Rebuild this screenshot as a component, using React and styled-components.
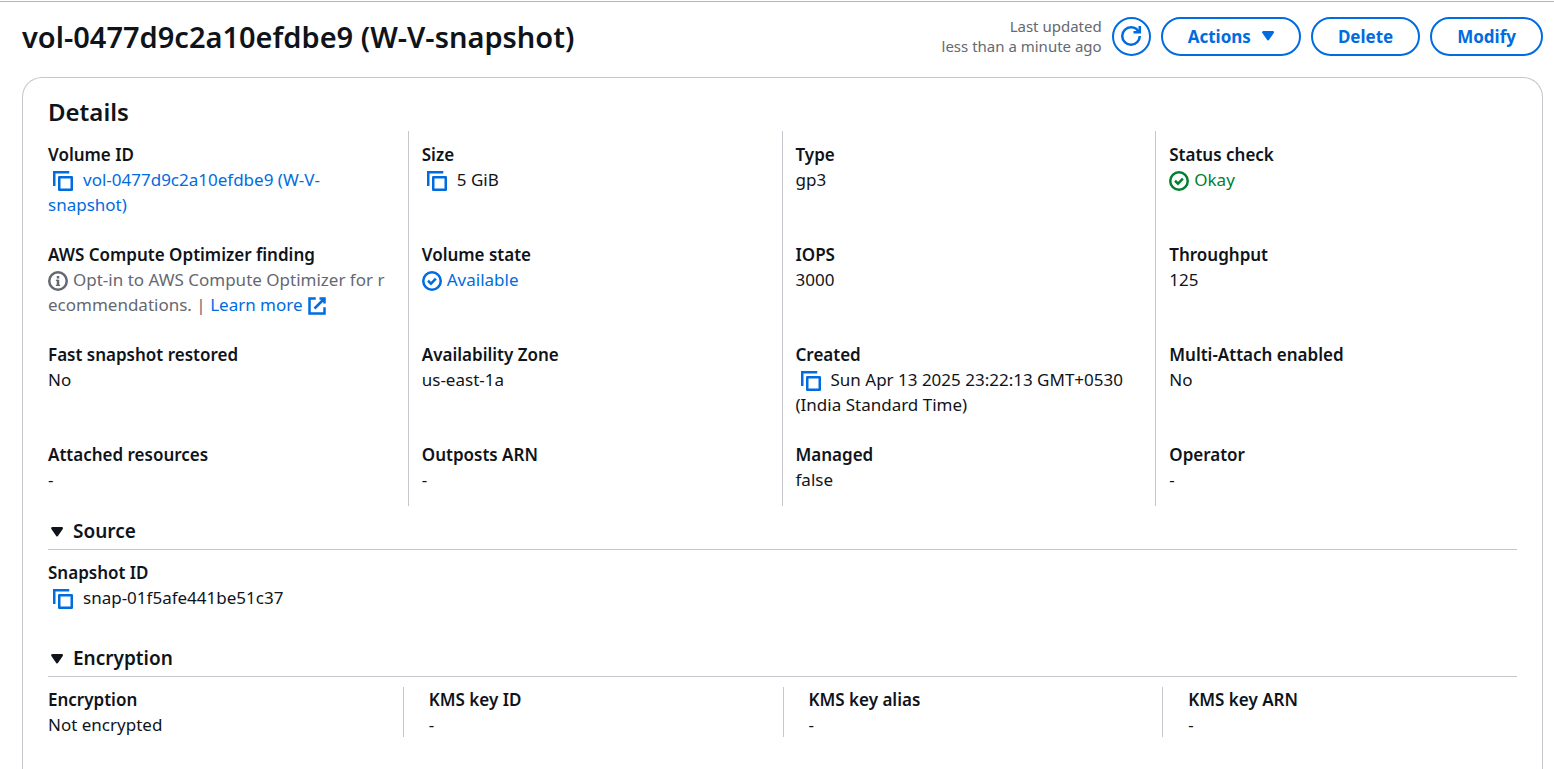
import React from "react";
import styled, { createGlobalStyle, css } from "styled-components";

const c = {
  text: "#0f141a",
  blue: "#006ce0",
  green: "#00802f",
  grey: "#656871",
  line: "#c6c6cd",
};

const GlobalStyle = createGlobalStyle`
  *, *::before, *::after { box-sizing: border-box; }
  body {
    margin: 0;
    background: #fff;
    color: ${c.text};
    font-family: "Noto Sans", "Open Sans", sans-serif;
    font-size: 17px;
    line-height: 25px;
  }
  h1, h2, h3, dl, dt, dd, p { margin: 0; }
`;

const Page = styled.main`
  display: flex;
  flex-direction: column;
  min-height: 100vh;
  padding: 1px 11px 0 22px;
`;

const TopRule = styled.div`
  height: 1px;
  margin: 0 -11px 0 -22px;
  background: #b4b4bb;
`;

const Header = styled.header`
  display: flex;
  align-items: center;
  justify-content: space-between;
  gap: 24px;
  padding: 14px 0 21px;
`;

const Title = styled.h1`
  font-size: 29px;
  font-weight: 600;
  line-height: 35px;
`;

const Actions = styled.div`
  display: flex;
  align-items: center;
  gap: 10px;
`;

const Updated = styled.p`
  color: ${c.grey};
  font-size: 15px;
  line-height: 20px;
  text-align: right;
`;

const Button = styled.button`
  display: inline-flex;
  align-items: center;
  justify-content: center;
  gap: 8px;
  height: 39px;
  padding: 0 25px;
  ${(p) => p.$menu && css`padding-right: 20px;`}
  ${(p) => p.$round && css`width: 39px; padding: 0;`}
  border: 2px solid ${c.blue};
  border-radius: 20px;
  background: #fff;
  color: ${c.blue};
  font: inherit;
  font-weight: 700;
  cursor: pointer;
`;

const Card = styled.section`
  flex: 1;
  padding-bottom: 31px;
  border: 1px solid ${c.line};
  border-bottom: 0;
  border-radius: 20px 20px 0 0;
`;

const CardTitle = styled.h2`
  padding: 19px 25px 4px;
  font-size: 24px;
  font-weight: 600;
  line-height: 30px;
`;

const DetailGrid = styled.dl`
  display: grid;
  grid-template-columns: repeat(4, minmax(0, 1fr));
  padding: 0 13px 0 11px;
`;

const DetailCell = styled.div`
  padding: 11px 16px 14px 13px;
  border-left: 1px solid ${c.line};
  &:nth-child(4n + 1) { border-left-color: transparent; }
`;

const SectionGrid = styled.dl`
  display: grid;
  grid-template-columns: repeat(4, minmax(0, 1fr));
  padding-top: 10px;
`;

const SectionCell = styled.div`
  padding: 0 25px;
  border-left: 1px solid ${c.line};
  &:first-child { border-left: 0; }
`;

const Label = styled.dt`
  font-weight: 600;
`;

const Value = styled.dd`
  word-break: ${(p) => (p.$breakAll ? "break-all" : "normal")};
  color: ${(p) => p.$color || "inherit"};
`;

const Link = styled.a`
  color: ${c.blue};
  text-decoration: none;
`;

const IconButton = styled.button`
  margin: 0 10px 0 5px;
  padding: 0;
  border: 0;
  background: none;
  color: ${c.blue};
  font: inherit;
  cursor: pointer;
`;

const Svg = styled.svg`
  width: 20px;
  height: 20px;
  vertical-align: -5px;
  fill: none;
  stroke: currentColor;
  stroke-width: 2;
`;

const StatusIcon = styled.span`
  margin-right: 5px;
`;

const SectionHeading = styled.h3`
  margin: 0 25px;
  padding: ${(p) => (p.$spaced ? 36 : 13)}px 0 5px;
  border-bottom: 1px solid ${c.line};
  font-size: 19px;
  font-weight: 600;
  line-height: 25px;
`;

const Toggle = styled.button`
  display: flex;
  align-items: center;
  gap: 5px;
  padding: 0;
  border: 0;
  background: none;
  color: inherit;
  font: inherit;
  cursor: pointer;
`;

const Icon = ({ children }) => (
  <Svg viewBox="0 0 16 16" aria-hidden="true">{children}</Svg>
);

const Caret = () => (
  <Icon>
    <path d="M3.5 5h7.5l-3.75 5.5z" fill="currentColor" strokeLinejoin="round" />
  </Icon>
);

const Copy = () => (
  <IconButton type="button" aria-label="Copy">
    <Icon>
      <path d="M1 12V1h12" />
      <path d="M5 5h10v10H5z" strokeLinejoin="round" />
    </Icon>
  </IconButton>
);

const Check = () => (
  <StatusIcon>
    <Icon>
      <circle cx="8" cy="8" r="7" />
      <path d="m4.8 7.8 2.4 2.3 3.9-4" />
    </Icon>
  </StatusIcon>
);

const details = [
  { label: "Volume ID", value: <><Copy /><Link href="#volume">vol-0477d9c2a10efdbe9 (W-V-snapshot)</Link></> },
  { label: "Size", value: <><Copy />5 GiB</> },
  { label: "Type", value: "gp3" },
  { label: "Status check", color: c.green, value: <><Check />Okay</> },
  {
    label: "AWS Compute Optimizer finding",
    color: c.grey,
    breakAll: true,
    value: (
      <>
        <StatusIcon>
          <Icon>
            <circle cx="8" cy="8" r="7" />
            <path d="M8 4v2M8 12V7" />
            <path d="M6.3 7.5H8M6.3 11.5h3.4" strokeWidth="1" />
          </Icon>
        </StatusIcon>
        Opt-in to AWS Compute Optimizer for recommendations. |{" "}
        <Link href="#learn-more">
          Learn more{" "}
          <Icon>
            <path d="M10 2h4v4M6 10l8-8M14 9v5H2V2h5" />
          </Icon>
        </Link>
      </>
    ),
  },
  { label: "Volume state", color: c.blue, value: <><Check />Available</> },
  { label: "IOPS", value: "3000" },
  { label: "Throughput", value: "125" },
  { label: "Fast snapshot restored", value: "No" },
  { label: "Availability Zone", value: "us-east-1a" },
  { label: "Created", value: <><Copy />Sun Apr 13 2025 23:22:13 GMT+0530 (India Standard Time)</> },
  { label: "Multi-Attach enabled", value: "No" },
  { label: "Attached resources", value: "-" },
  { label: "Outposts ARN", value: "-" },
  { label: "Managed", value: "false" },
  { label: "Operator", value: "-" },
];

const encryption = [
  { label: "Encryption", value: "Not encrypted" },
  { label: "KMS key ID", value: "-" },
  { label: "KMS key alias", value: "-" },
  { label: "KMS key ARN", value: "-" },
];

const Section = ({ title, spaced, items }) => (
  <>
    <SectionHeading $spaced={spaced}>
      <Toggle type="button" aria-expanded="true"><Caret />{title}</Toggle>
    </SectionHeading>
    <SectionGrid>
      {items.map((d) => (
        <SectionCell key={d.label}>
          <Label>{d.label}</Label>
          <Value>{d.value}</Value>
        </SectionCell>
      ))}
    </SectionGrid>
  </>
);

export default function App() {
  return (
    <>
      <GlobalStyle />
      <Page>
        <TopRule />
        <Header>
          <Title>vol-0477d9c2a10efdbe9 (W-V-snapshot)</Title>
          <Actions>
            <Updated>Last updated<br />less than a minute ago</Updated>
            <Button type="button" $round aria-label="Refresh">
              <Icon>
                <path d="M10 5h5V0" />
                <path d="M15 8a6.957 6.957 0 0 1-7 7 6.957 6.957 0 0 1-7-7 6.957 6.957 0 0 1 7-7 6.87 6.87 0 0 1 6.3 4" />
              </Icon>
            </Button>
            <Button type="button" $menu>Actions<Caret /></Button>
            <Button type="button">Delete</Button>
            <Button type="button">Modify</Button>
          </Actions>
        </Header>
        <Card>
          <CardTitle>Details</CardTitle>
          <DetailGrid>
            {details.map((d) => (
              <DetailCell key={d.label}>
                <Label>{d.label}</Label>
                <Value $color={d.color} $breakAll={d.breakAll}>{d.value}</Value>
              </DetailCell>
            ))}
          </DetailGrid>
          <Section title="Source" items={[{ label: "Snapshot ID", value: <><Copy />snap-01f5afe441be51c37</> }]} />
          <Section title="Encryption" spaced items={encryption} />
        </Card>
      </Page>
    </>
  );
}
